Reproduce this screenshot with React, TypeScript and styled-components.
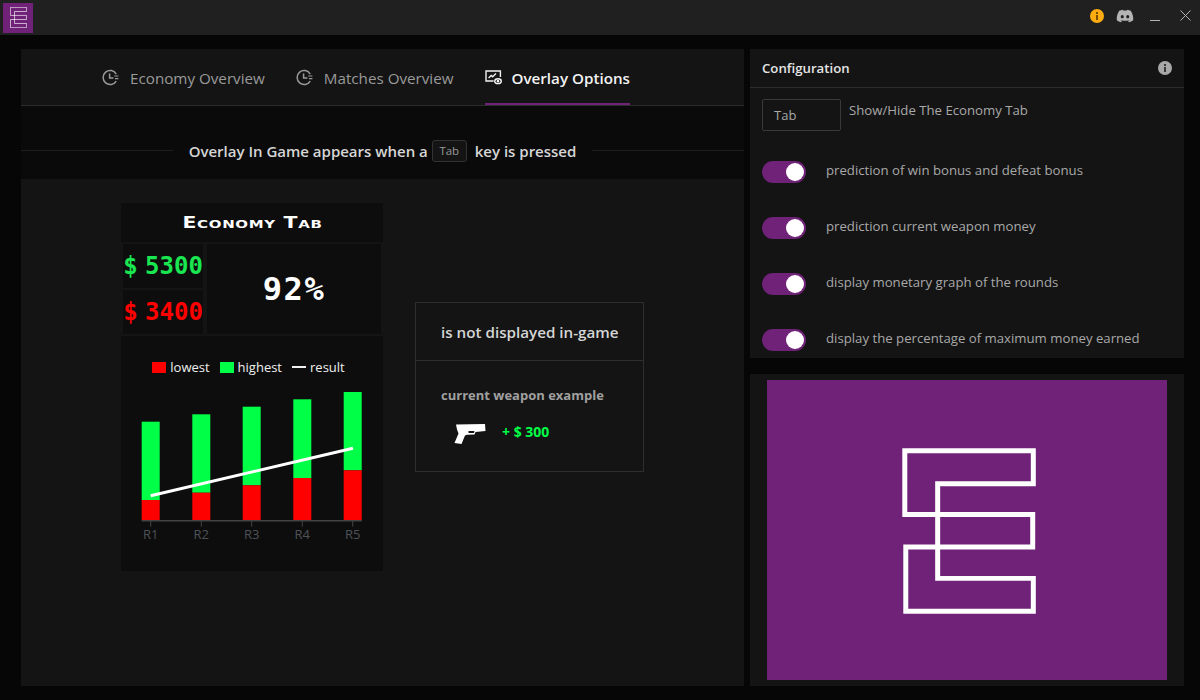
import React from 'react';
import styled, { createGlobalStyle } from 'styled-components';
import { FaDiscord } from 'react-icons/fa';

const PURPLE = '#6f2277';
const UI_FONT = '"Open Sans", "Noto Sans", sans-serif';

const GlobalStyle = createGlobalStyle`
  html, body {
    margin: 0;
    height: 100%;
    overflow: hidden;
    background: #060606;
  }
  body {
    font-family: ${UI_FONT};
  }
`;

const Page = styled.div`
  width: 1200px;
  height: 700px;
  display: flex;
  flex-direction: column;
  background: #060606;
`;

const TitleBar = styled.header`
  height: 35px;
  flex: none;
  display: flex;
  align-items: center;
  justify-content: space-between;
  padding: 0 9px 0 3px;
  background: #202020;
`;

const TitleActions = styled.div`
  display: flex;
  align-items: center;
  padding-bottom: 4px;
  color: #b4b4b4;
`;

const AppIcon = styled.div`
  width: 30px;
  height: 30px;
  background: ${PURPLE};
  display: flex;
  align-items: center;
  justify-content: center;
`;

const Main = styled.main`
  flex: 1;
  display: flex;
  gap: 6px;
  padding: 14px 16px 14px 21px;
  min-height: 0;
`;

const LeftColumn = styled.section`
  width: 723px;
  display: flex;
  flex-direction: column;
`;

const RightColumn = styled.aside`
  width: 434px;
  display: flex;
  flex-direction: column;
  gap: 16px;
`;

const TabBar = styled.nav`
  height: 56px;
  flex: none;
  display: flex;
  justify-content: center;
  gap: 31px;
  padding-right: 33px;
  background: #141414;
  border-bottom: 1px solid #2c2c2c;
  box-sizing: content-box;
`;

const TabItem = styled.div<{ $active?: boolean }>`
  display: flex;
  align-items: center;
  gap: ${(p) => (p.$active ? 10 : 11)}px;
  height: 56px;
  box-sizing: border-box;
  padding-top: 3px;
  font-size: 15.2px;
  font-weight: ${(p) => (p.$active ? 600 : 400)};
  color: ${(p) => (p.$active ? '#f2f2f2' : '#9a9a9a')};
  border-bottom: 2px solid ${(p) => (p.$active ? PURPLE : 'transparent')};
  margin-bottom: -1px;
`;

const Notice = styled.div`
  height: 73px;
  flex: none;
  box-sizing: border-box;
  padding-top: 16px;
  display: flex;
  align-items: center;
  gap: 16px;
  background: #0a0a0a;
  font-size: 15px;
  font-weight: 600;
  color: #d6d6d6;
`;

const NoticeRule = styled.div`
  flex: 1;
  height: 1px;
  background: #1e1e1e;
`;

const NoticeText = styled.div`
  display: flex;
  align-items: center;
  gap: 8px;
`;

const Kbd = styled.span`
  width: 35px;
  height: 22px;
  margin-left: -4px;
  display: flex;
  align-items: center;
  justify-content: center;
  box-sizing: border-box;
  border: 1px solid #333;
  border-radius: 3px;
  background: #141414;
  font-size: 11.5px;
  font-weight: 400;
  color: #9a9a9a;
`;

const Stage = styled.div`
  flex: 1;
  display: flex;
  align-items: flex-start;
  gap: 32px;
  padding: 24px 0 0 100px;
  background: #141414;
`;

const EconomyCard = styled.div`
  width: 262px;
  display: flex;
  flex-direction: column;
  gap: 2px;
`;

const CardTitle = styled.div`
  height: 39px;
  display: flex;
  align-items: center;
  justify-content: center;
  background: #0d0d0d;
  color: #fff;
  font-family: "DejaVu Sans", sans-serif;
  font-variant: small-caps;
  font-weight: 700;
  font-size: 15px;
  letter-spacing: 0.5px;
`;

const CardTitleText = styled.span`
  display: inline-block;
  transform: scaleX(1.36);
`;

const StatsRow = styled.div`
  height: 90px;
  display: flex;
  justify-content: space-between;
  padding: 0 2px;
`;

const MoneyColumn = styled.div`
  width: 80px;
  display: flex;
  flex-direction: column;
  gap: 2px;
`;

const MoneyCell = styled.div<{ $color: string }>`
  flex: 1;
  display: flex;
  align-items: center;
  justify-content: center;
  background: #0d0d0d;
  color: ${(p) => p.$color};
  font-family: "DejaVu Sans Mono", monospace;
  font-weight: 700;
  font-size: 24px;
  word-spacing: -7px;
`;

const PercentCell = styled.div`
  width: 174px;
  display: flex;
  align-items: center;
  justify-content: center;
  background: #0d0d0d;
  color: #fff;
  font-family: "DejaVu Sans Mono", monospace;
  font-weight: 700;
  font-size: 32px;
  letter-spacing: 1.5px;
`;

const ChartPanel = styled.div`
  height: 235px;
  display: flex;
  flex-direction: column;
  background: #0d0d0d;
`;

const Legend = styled.div`
  display: flex;
  justify-content: center;
  align-items: center;
  gap: 10px;
  height: 56px;
  flex: none;
  padding: 6px 7px 0 0;
  box-sizing: border-box;
  font-size: 13px;
  color: #f0f0f0;
`;

const LegendItem = styled.span`
  display: flex;
  align-items: center;
  gap: 4px;
`;

const Swatch = styled.span<{ $color: string }>`
  width: 14px;
  height: 11px;
  background: ${(p) => p.$color};
`;

const LineSwatch = styled.span`
  width: 14px;
  height: 2px;
  background: #f0f0f0;
`;

const InfoBox = styled.div`
  width: 229px;
  height: 170px;
  margin-top: 99px;
  box-sizing: border-box;
  border: 1px solid #2e2e2e;
  display: flex;
  flex-direction: column;
`;

const InfoHead = styled.div`
  height: 58px;
  flex: none;
  box-sizing: border-box;
  display: flex;
  align-items: center;
  padding-left: 25px;
  border-bottom: 1px solid #2e2e2e;
  font-size: 15.2px;
  font-weight: 600;
  color: #d6d6d6;
`;

const InfoBody = styled.div`
  padding: 25px 0 0 25px;
`;

const InfoLabel = styled.div`
  font-size: 13px;
  font-weight: 700;
  color: #a0a0a0;
`;

const WeaponRow = styled.div`
  display: flex;
  align-items: center;
  gap: 16px;
  margin: 18px 0 0 13px;
`;

const WeaponGain = styled.span`
  margin-bottom: 6px;
  font-size: 14px;
  font-weight: 700;
  color: #00ff47;
`;

const ConfigPanel = styled.div`
  height: 309px;
  flex: none;
  overflow: hidden;
  background: #141414;
`;

const ConfigHead = styled.div`
  height: 39px;
  box-sizing: border-box;
  display: flex;
  align-items: center;
  justify-content: space-between;
  padding: 0 12px;
  border-bottom: 1px solid #2c2c2c;
  font-size: 13.2px;
  font-weight: 600;
  color: #e4e4e4;
`;

const ConfigBody = styled.div`
  padding: 11px 12px 0;
  display: flex;
  flex-direction: column;
  gap: 34px;
`;

const KeyRow = styled.div`
  display: flex;
  align-items: flex-start;
  gap: 8px;
  margin-bottom: -4px;
  font-size: 13.2px;
  color: #a8a8a8;
`;

const KeyInput = styled.div`
  width: 79px;
  height: 32px;
  box-sizing: border-box;
  display: flex;
  align-items: center;
  padding-left: 11px;
  border: 1px solid #3a3a3a;
  border-radius: 2px;
  font-size: 13px;
  color: #a8a8a8;
`;

const KeyLabel = styled.span`
  line-height: 22px;
`;

const ToggleRow = styled.div`
  display: flex;
  align-items: center;
  gap: 20px;
  font-size: 13.2px;
  color: #a8a8a8;
`;

const ToggleLabel = styled.span`
  padding-bottom: 4px;
`;

const Toggle = styled.span`
  width: 44px;
  height: 22px;
  flex: none;
  box-sizing: border-box;
  display: flex;
  align-items: center;
  justify-content: flex-end;
  padding-right: 2px;
  border-radius: 11px;
  background: ${PURPLE};
`;

const ToggleKnob = styled.span`
  width: 18px;
  height: 18px;
  border-radius: 50%;
  background: #fff;
`;

const LogoPanel = styled.div`
  flex: 1;
  display: flex;
  padding: 6px 17px;
  background: #141414;
`;

const LogoCanvas = styled.div`
  flex: 1;
  display: flex;
  align-items: center;
  justify-content: center;
  padding: 2px 0 0 4px;
  background: ${PURPLE};
`;

const LOGO_POINTS =
  '24.3,20.3 153.3,20.3 153.3,53.3 57.3,53.3 57.3,148.3 153.3,148.3 153.3,181.3 25.3,181.3 25.3,116.7 152.7,116.7 152.7,84.3 24.3,84.3';

const Logo: React.FC<{ width: number; height: number; strokeWidth: number; opacity?: number }> = ({
  width,
  height,
  strokeWidth,
  opacity = 1,
}) => (
  <svg width={width} height={height} viewBox="21.5 17.5 134.5 166.5" fill="none">
    <polygon points={LOGO_POINTS} stroke="#fff" strokeWidth={strokeWidth} strokeOpacity={opacity} />
  </svg>
);

const HistoryIcon: React.FC = () => (
  <svg width="17" height="17" viewBox="0 0 17 17" fill="none" stroke="#9a9a9a" strokeWidth="1.5">
    <path d="M14.2 5A7 7 0 1 0 14.2 12" />
    <path d="M7.6 4.4V9H11.4" />
    <path d="M12.2 7H16.4M13 9.6H16.4" strokeWidth="1.1" />
  </svg>
);

const OverlayIcon: React.FC = () => (
  <svg width="17" height="15" viewBox="0 0 17 15" fill="none" stroke="#f2f2f2" strokeWidth="1.4">
    <path d="M8.6 11H1V1H15.4V7" />
    <path d="M3.6 8L6.2 5.4L7.6 6.8L11 3.6" />
    <ellipse cx="13" cy="11.2" rx="3.3" ry="2.4" />
    <circle cx="13" cy="11.2" r="0.7" fill="#f2f2f2" />
  </svg>
);

const InfoIcon: React.FC<{ color: string; size: number; mark: string }> = ({ color, size, mark }) => (
  <svg width={size} height={size} viewBox="0 0 14 14">
    <circle cx="7" cy="7" r="7" fill={color} />
    <rect x="6" y="6" width="2" height="5" fill={mark} />
    <rect x="6" y="3" width="2" height="2" fill={mark} />
  </svg>
);

const DiscordSlot = styled.span`
  display: flex;
  margin: 0 16px 0 12px;
`;

const MinimizeIcon = styled.span`
  width: 10px;
  height: 1px;
  margin: 9px 20px 0 0;
  background: #b4b4b4;
`;

const CloseIcon: React.FC = () => (
  <svg width="11" height="11" viewBox="0 0 11 11" stroke="#b4b4b4" strokeWidth="1">
    <path d="M0.5 0.5L10.5 10.5M10.5 0.5L0.5 10.5" />
  </svg>
);

const GunIcon: React.FC = () => (
  <svg width="32" height="21" viewBox="0 0 32 21" fill="#fff">
    <path
      fillRule="evenodd"
      d="M2 0.5L31 0L31.5 7L21.5 8L20.5 10.5L13 10.8L11 11.5L7.5 20L0.5 19L4.5 9.5L3 5.5ZM14.5 7L20.5 7L20 9L14.5 9Z"
    />
  </svg>
);

const rounds = [
  { label: 'R1', x: 20.7, top: 85.7, split: 164 },
  { label: 'R2', x: 71.3, top: 78.3, split: 156.7 },
  { label: 'R3', x: 121.7, top: 70.7, split: 149.3 },
  { label: 'R4', x: 172.3, top: 63.3, split: 142 },
  { label: 'R5', x: 222.7, top: 56, split: 134.3 },
];

const BASE_Y = 184.7;

const RoundsChart: React.FC = () => (
  <svg width="262" height="179" viewBox="0 56 262 179">
    {rounds.map((r) => (
      <g key={r.label}>
        <rect x={r.x} y={r.top} width="18" height={r.split - r.top} fill="#00ff47" />
        <rect x={r.x} y={r.split} width="18" height={BASE_Y - r.split} fill="#ff0000" />
        <line x1={r.x + 9} x2={r.x + 9} y1={BASE_Y} y2={BASE_Y + 6} stroke="#444" />
        <text
          x={r.x + 9}
          y={BASE_Y + 18}
          textAnchor="middle"
          fontSize="13"
          fontFamily={UI_FONT}
          fill="#4d5258"
        >
          {r.label}
        </text>
      </g>
    ))}
    <line x1="20.7" x2="240.7" y1={BASE_Y} y2={BASE_Y} stroke="#444" strokeWidth="1.5" />
    <line x1="29.7" y1="159.7" x2="232" y2="112.3" stroke="#fff" strokeWidth="3" />
  </svg>
);

const toggles = [
  'prediction of win bonus and defeat bonus',
  'prediction current weapon money',
  'display monetary graph of the rounds',
  'display the percentage of maximum money earned',
];

export default function App() {
  return (
    <Page>
      <GlobalStyle />
      <TitleBar>
        <AppIcon>
          <Logo width={17} height={21} strokeWidth={6} opacity={0.85} />
        </AppIcon>
        <TitleActions>
          <InfoIcon color="#fcab10" size={14} mark="#7a4d00" />
          <DiscordSlot>
            <FaDiscord size={18} />
          </DiscordSlot>
          <MinimizeIcon />
          <CloseIcon />
        </TitleActions>
      </TitleBar>
      <Main>
        <LeftColumn>
          <TabBar>
            <TabItem>
              <HistoryIcon />
              Economy Overview
            </TabItem>
            <TabItem>
              <HistoryIcon />
              Matches Overview
            </TabItem>
            <TabItem $active>
              <OverlayIcon />
              Overlay Options
            </TabItem>
          </TabBar>
          <Notice>
            <NoticeRule />
            <NoticeText>
              Overlay In Game appears when a <Kbd>Tab</Kbd> key is pressed
            </NoticeText>
            <NoticeRule />
          </Notice>
          <Stage>
            <EconomyCard>
              <CardTitle>
                <CardTitleText>Economy Tab</CardTitleText>
              </CardTitle>
              <StatsRow>
                <MoneyColumn>
                  <MoneyCell $color="#19e650">$ 5300</MoneyCell>
                  <MoneyCell $color="#ff0000">$ 3400</MoneyCell>
                </MoneyColumn>
                <PercentCell>92%</PercentCell>
              </StatsRow>
              <ChartPanel>
                <Legend>
                  <LegendItem>
                    <Swatch $color="#ff0000" />
                    lowest
                  </LegendItem>
                  <LegendItem>
                    <Swatch $color="#00ff47" />
                    highest
                  </LegendItem>
                  <LegendItem>
                    <LineSwatch />
                    result
                  </LegendItem>
                </Legend>
                <RoundsChart />
              </ChartPanel>
            </EconomyCard>
            <InfoBox>
              <InfoHead>is not displayed in-game</InfoHead>
              <InfoBody>
                <InfoLabel>current weapon example</InfoLabel>
                <WeaponRow>
                  <GunIcon />
                  <WeaponGain>+ $ 300</WeaponGain>
                </WeaponRow>
              </InfoBody>
            </InfoBox>
          </Stage>
        </LeftColumn>
        <RightColumn>
          <ConfigPanel>
            <ConfigHead>
              Configuration
              <InfoIcon color="#a8a8a8" size={14} mark="#3a3a3a" />
            </ConfigHead>
            <ConfigBody>
              <KeyRow>
                <KeyInput>Tab</KeyInput>
                <KeyLabel>Show/Hide The Economy Tab</KeyLabel>
              </KeyRow>
              {toggles.map((label) => (
                <ToggleRow key={label}>
                  <Toggle>
                    <ToggleKnob />
                  </Toggle>
                  <ToggleLabel>{label}</ToggleLabel>
                </ToggleRow>
              ))}
            </ConfigBody>
          </ConfigPanel>
          <LogoPanel>
            <LogoCanvas>
              <Logo width={134} height={166} strokeWidth={5} />
            </LogoCanvas>
          </LogoPanel>
        </RightColumn>
      </Main>
    </Page>
  );
}
